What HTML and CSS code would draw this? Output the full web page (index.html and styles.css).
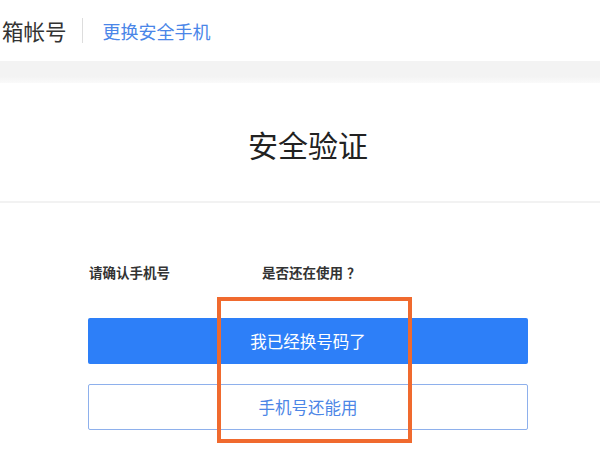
FILE: index.html
```html
<!DOCTYPE html>
<html lang="zh-CN">
<head>
<meta charset="utf-8">
<title>安全验证</title>
<link rel="stylesheet" href="styles.css">
</head>
<body>
<header class="topbar">
  <span class="brand">箱帐号</span>
  <span class="sep"></span>
  <a class="toplink" href="#">更换安全手机</a>
</header>
<div class="band"></div>
<section class="title-box">
  <h1 class="title">安全验证</h1>
</section>
<main class="content">
  <div class="labels">
    <span class="label first">请确认手机号</span>
    <span class="label">是否还在使用<span class="qmark">？</span></span>
  </div>
  <button class="btn btn-primary">我已经换号码了</button>
  <button class="btn btn-outline">手机号还能用</button>
</main>
<div class="highlight"></div>
</body>
</html>
```

FILE: styles.css
```css
html, body {
  margin: 0;
  padding: 0;
  background: #ffffff;
  width: 600px;
  height: 450px;
  overflow: hidden;
  font-family: "Noto Sans CJK SC", "Noto Sans", sans-serif;
}
.topbar {
  height: 61px;
  display: flex;
  align-items: center;
  padding-left: 2px;
  box-sizing: border-box;
}
.brand {
  font-size: 21.5px;
  color: #333333;
  line-height: 26px;
}
.sep {
  width: 1px;
  height: 25px;
  background: #dddddd;
  margin-left: 15px;
  margin-right: 20px;
}
.toplink {
  font-size: 18px;
  color: #4a86e8;
  text-decoration: none;
  line-height: 24px;
}
.band {
  height: 22px;
  background: linear-gradient(#f3f3f3 0%, #f3f3f3 70%, #fafafa 100%);
}
.title-box {
  height: 120px;
  box-sizing: border-box;
  border-bottom: 2px solid #f2f2f2;
  display: flex;
  justify-content: center;
  padding-top: 43px;
}
.title {
  margin: 0;
  font-size: 30px;
  font-weight: normal;
  color: #222222;
  line-height: 36px;
  padding-left: 16px;
}
.content {
  width: 440px;
  margin-left: 88px;
  padding-top: 59px;
  display: flex;
  flex-direction: column;
}
.labels {
  display: flex;
  height: 20px;
  align-items: center;
  margin-left: 1px;
}
.label {
  font-size: 13.5px;
  font-weight: bold;
  color: #333333;
  line-height: 20px;
}
.label.first {
  width: 173px;
}
.qmark {
  padding-left: 4px;
}
.btn {
  font-family: inherit;
  height: 46px;
  width: 440px;
  border-radius: 2px;
  font-size: 16.5px;
  cursor: pointer;
  padding: 0;
}
.btn-primary {
  margin-top: 36px;
  background: #2d7ff8;
  color: #ffffff;
  border: none;
}
.btn-outline {
  margin-top: 20px;
  background: #ffffff;
  color: #4d86e6;
  border: 1px solid #8eb0ec;
}
.highlight {
  position: absolute;
  left: 217px;
  top: 297px;
  width: 195px;
  height: 146px;
  box-sizing: border-box;
  border: 4px solid #f06a2e;
}
```
